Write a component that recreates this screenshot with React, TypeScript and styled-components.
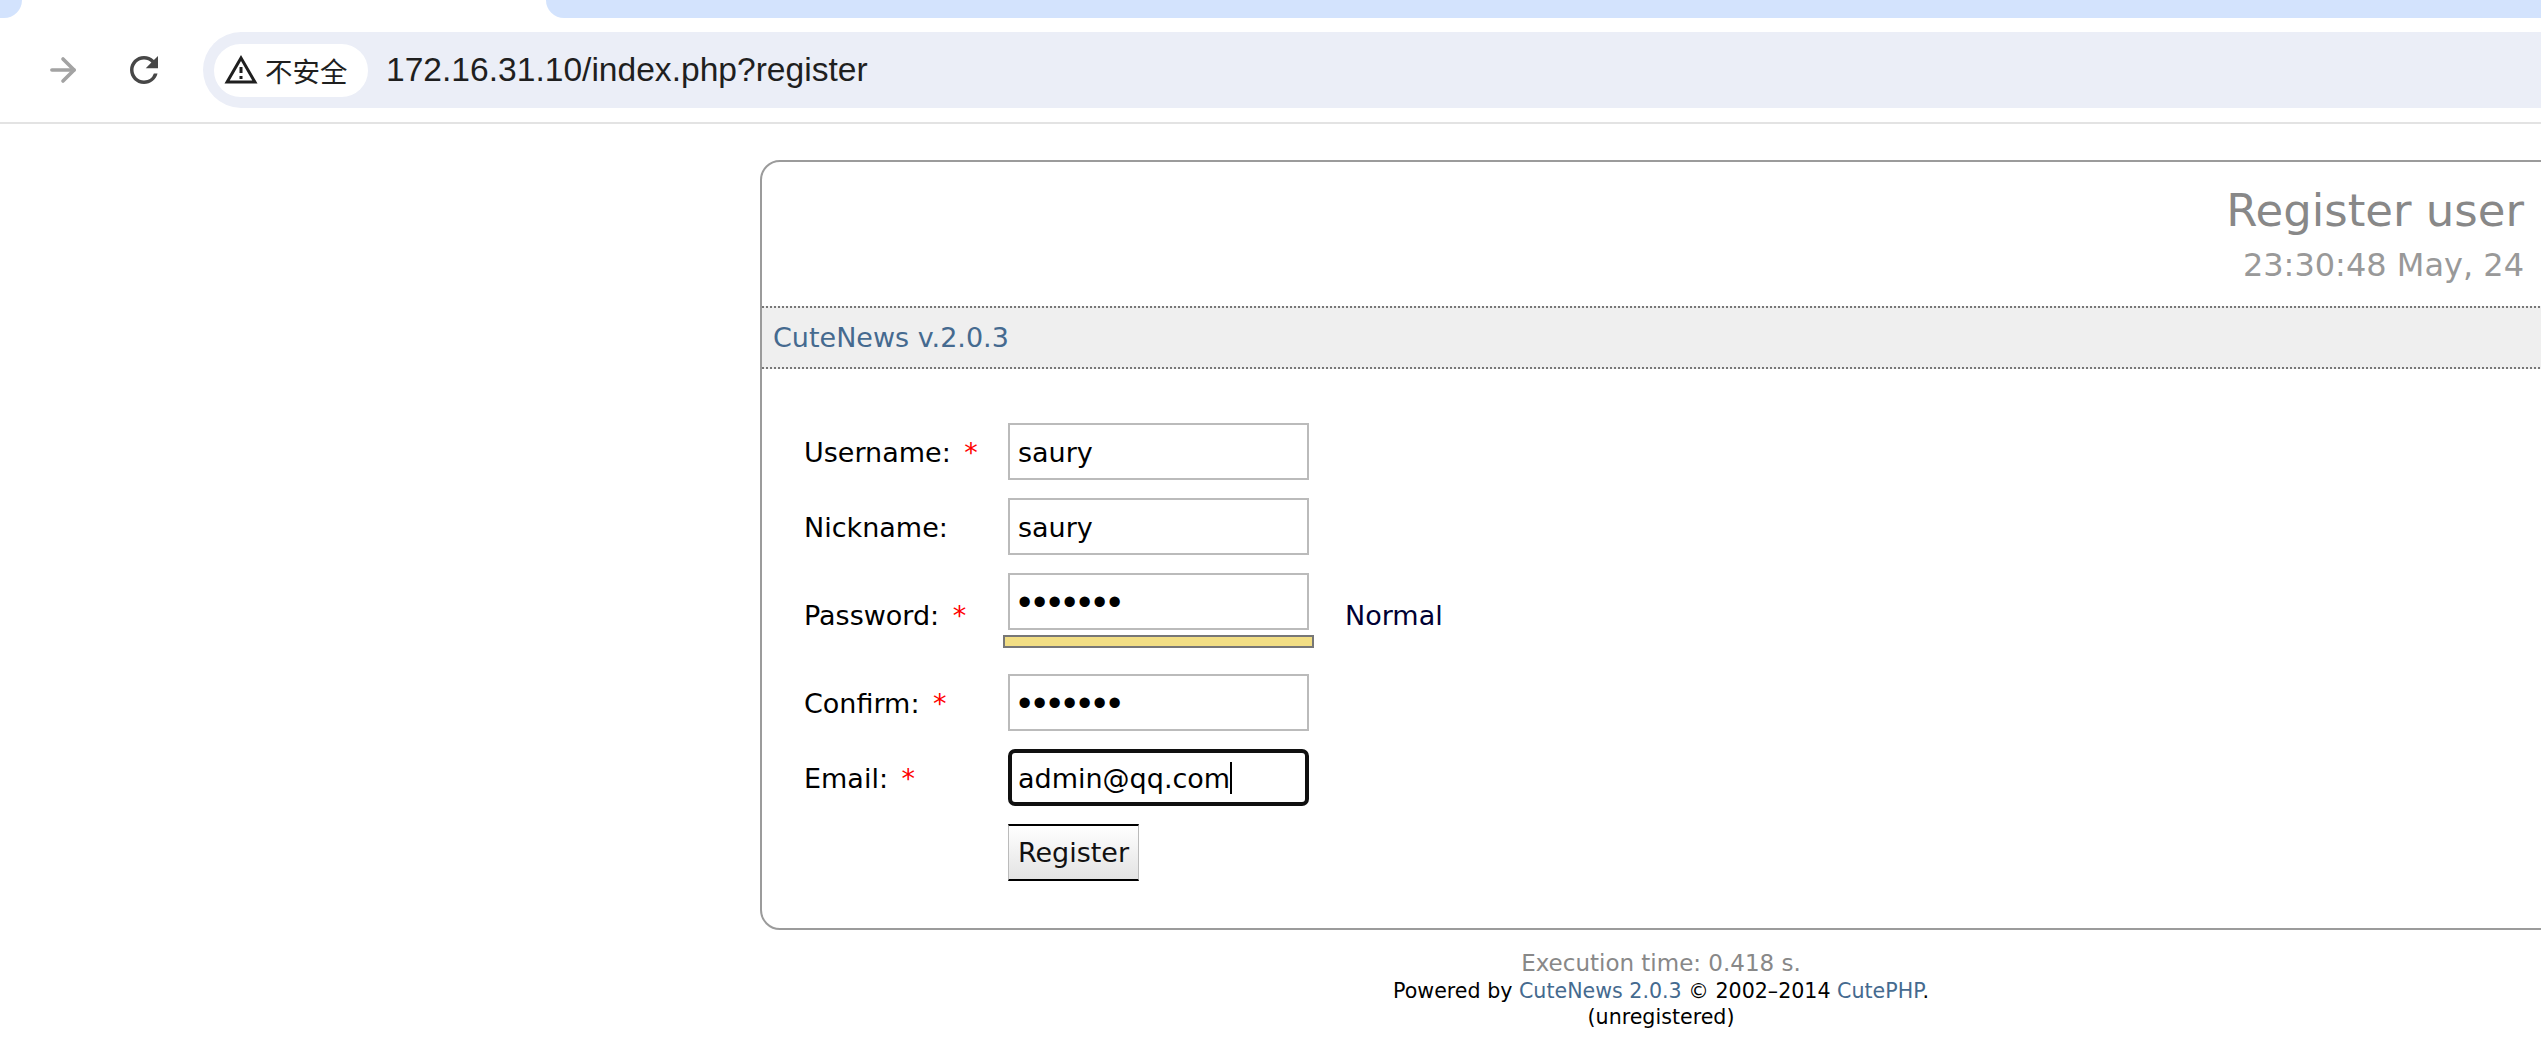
import * as React from 'react';
import styled, { createGlobalStyle } from 'styled-components';
import { ArrowRight } from 'lucide-react';

const GlobalStyle = createGlobalStyle`
  html, body {
    margin: 0;
    background: #ffffff;
    overflow: hidden;
  }
`;

const Screen = styled.div`
  width: 2541px;
  height: 1046px;
  overflow: hidden;
  background: #ffffff;
`;

const TabStrip = styled.div`
  display: flex;
  justify-content: space-between;
  height: 18px;
`;

const TabStripEdge = styled.div`
  width: 22px;
  background: #d3e3fd;
  border-bottom-right-radius: 20px;
`;

const TabStripRest = styled.div`
  width: 1995px;
  background: #d3e3fd;
  border-bottom-left-radius: 24px;
`;

const Toolbar = styled.div`
  display: flex;
  align-items: center;
  height: 76px;
  margin-top: 14px;
  padding-left: 44px;
`;

const NavButton = styled.div<{ $width: number; $gap: number }>`
  display: flex;
  align-items: center;
  justify-content: center;
  width: ${props => props.$width}px;
  height: 42px;
  margin-right: ${props => props.$gap}px;
  color: #474747;
`;

const AddressBar = styled.div`
  display: flex;
  flex: 1;
  align-items: center;
  height: 76px;
  padding-left: 11px;
  background: #ebeef7;
  border-radius: 38px 0 0 38px;
`;

const SecurityChip = styled.div`
  display: flex;
  align-items: center;
  gap: 6px;
  width: 154px;
  height: 53px;
  padding-left: 9px;
  box-sizing: border-box;
  background: #ffffff;
  border-radius: 27px;
  font: 27.5px 'Noto Sans CJK SC', 'Liberation Sans', sans-serif;
  color: #1f1f1f;
`;

const Url = styled.div`
  margin-left: 18px;
  font: 33.6px 'Liberation Sans', sans-serif;
  color: #1f1f1f;
`;

const ToolbarRule = styled.div`
  height: 2px;
  margin-top: 14px;
  background: #e3e3e3;
`;

const Page = styled.div`
  width: 1802px;
  margin: 36px 0 0 760px;
  font-family: 'DejaVu Sans', Verdana, sans-serif;
`;

const Card = styled.div`
  height: 770px;
  box-sizing: border-box;
  border: 2px solid #9b9b9b;
  border-radius: 20px;
`;

const CardHead = styled.div`
  height: 144px;
  padding: 22px 36px 0 0;
  box-sizing: border-box;
  text-align: right;
`;

const Title = styled.div`
  font-size: 45px;
  line-height: 54px;
  color: #888888;
`;

const DateLine = styled.div`
  margin-top: 8px;
  font-size: 32px;
  line-height: 38px;
  color: #999999;
`;

const Band = styled.div`
  display: flex;
  align-items: center;
  height: 59px;
  padding-left: 11px;
  background: #efefef;
  border-top: 2px dotted #777777;
  border-bottom: 2px dotted #777777;
  font-size: 27px;
  color: #456a8f;
`;

const Form = styled.div`
  display: grid;
  grid-template-columns: 204px 337px auto;
  justify-content: start;
  row-gap: 18px;
  align-items: center;
  margin: 54px 0 0 42px;
  font-size: 27px;
  color: #000000;
`;

const Label = styled.div`
  padding-top: 2px;
`;

const Required = styled.span`
  margin-left: 5px;
  color: #ff0000;
`;

const FieldCell = styled.div``;

const TextInput = styled.input<{ $masked?: boolean }>`
  display: block;
  width: 301px;
  height: 57px;
  padding: 2px 8px 0;
  box-sizing: border-box;
  border: 2px solid #bbbbbb;
  border-radius: 0;
  outline: none;
  background: #ffffff;
  font-family: ${props => (props.$masked ? "'Liberation Sans'" : "'DejaVu Sans'")}, Verdana, sans-serif;
  font-size: ${props => (props.$masked ? 38 : 27)}px;
  letter-spacing: ${props => (props.$masked ? 1.7 : 0)}px;
  color: #000000;
`;

const FocusedInput = styled.div`
  display: flex;
  align-items: center;
  width: 301px;
  height: 57px;
  padding: 1px 6px 0;
  box-sizing: border-box;
  border: 4px solid #101010;
  border-radius: 7px;
  font-size: 27px;
`;

const Caret = styled.span`
  width: 2px;
  height: 32px;
  background: #000000;
`;

const StrengthBar = styled.div`
  width: 311px;
  height: 13px;
  margin: 5px 0 8px -5px;
  box-sizing: border-box;
  border: 2px solid #777777;
  background: #f2de84;
`;

const StrengthText = styled.div`
  padding-top: 2px;
  color: #000033;
`;

const RegisterButton = styled.button`
  display: block;
  width: 131px;
  height: 57px;
  padding: 0;
  box-sizing: border-box;
  border-style: solid;
  border-width: 2px 1px;
  border-color: #000000 #bbbbbb;
  background: linear-gradient(#ffffff, #e3e3e3);
  font-family: 'DejaVu Sans', Verdana, sans-serif;
  font-size: 27px;
  color: #111111;
`;

const Footer = styled.div`
  margin-top: 18px;
  text-align: center;
  color: #000000;
  font-size: 20.6px;
  line-height: 26px;
`;

const Execution = styled.div`
  font-size: 23px;
  line-height: 30px;
  color: #888888;
`;

const FooterLink = styled.span`
  color: #456a8f;
`;

const fields = [
  { label: 'Username:', required: true, value: 'saury', type: 'text' },
  { label: 'Nickname:', required: false, value: 'saury', type: 'text' },
  { label: 'Password:', required: true, value: 'saury12', type: 'password', strength: 'Normal' },
  { label: 'Confirm:', required: true, value: 'saury12', type: 'password' },
];

const App = () => (
  <Screen>
    <GlobalStyle />
    <TabStrip>
      <TabStripEdge />
      <TabStripRest />
    </TabStrip>
    <Toolbar>
      <NavButton $width={38} $gap={41}>
        <ArrowRight size={40} color="#a3a3a3" strokeWidth={2.3} />
      </NavButton>
      <NavButton $width={42} $gap={38}>
        <svg viewBox="0 0 24 24" width="42" height="42" fill="currentColor">
          <path d="M17.65 6.35A7.958 7.958 0 0 0 12 4c-4.42 0-7.99 3.58-7.99 8s3.57 8 7.99 8c3.73 0 6.84-2.55 7.73-6h-2.08A5.99 5.99 0 0 1 12 18c-3.31 0-6-2.69-6-6s2.69-6 6-6c1.66 0 3.14.69 4.22 1.78L13 11h7V4l-2.35 2.35z" />
        </svg>
      </NavButton>
      <AddressBar>
        <SecurityChip>
          <svg viewBox="0 0 24 24" width="36" height="36" fill="#1f1f1f">
            <path d="M1 21h22L12 2 1 21zm3.47-2L12 5.99 19.53 19H4.47zM11 16h2v2h-2zm0-6h2v4h-2z" />
          </svg>
          不安全
        </SecurityChip>
        <Url>172.16.31.10/index.php?register</Url>
      </AddressBar>
    </Toolbar>
    <ToolbarRule />
    <Page>
      <Card>
        <CardHead>
          <Title>Register user</Title>
          <DateLine>23:30:48 May, 24</DateLine>
        </CardHead>
        <Band>CuteNews v.2.0.3</Band>
        <Form>
          {fields.map(field => (
            <React.Fragment key={field.label}>
              <Label>
                {field.label}
                {field.required && <Required> *</Required>}
              </Label>
              <FieldCell>
                <TextInput
                  type={field.type}
                  $masked={field.type === 'password'}
                  defaultValue={field.value}
                  readOnly
                />
                {field.strength && <StrengthBar />}
              </FieldCell>
              <StrengthText>{field.strength}</StrengthText>
            </React.Fragment>
          ))}
          <Label>
            Email:
            <Required> *</Required>
          </Label>
          <FieldCell>
            <FocusedInput>
              admin@qq.com
              <Caret />
            </FocusedInput>
          </FieldCell>
          <StrengthText />
          <Label />
          <FieldCell>
            <RegisterButton>Register</RegisterButton>
          </FieldCell>
        </Form>
      </Card>
      <Footer>
        <Execution>Execution time: 0.418 s.</Execution>
        Powered by <FooterLink>CuteNews 2.0.3</FooterLink> © 2002–2014 <FooterLink>CutePHP</FooterLink>.
        <br />
        (unregistered)
      </Footer>
    </Page>
  </Screen>
);

export default App;
